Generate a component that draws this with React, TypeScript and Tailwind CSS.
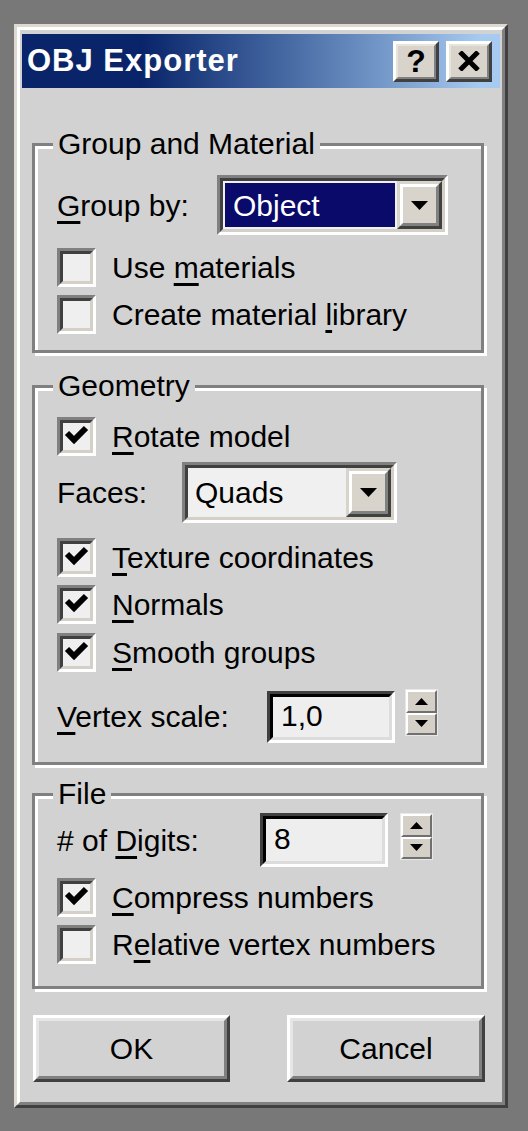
import type { ReactNode } from 'react';

const FACE = 'bg-[#d2d2d2]';

function CheckBox({ checked }: { checked?: boolean }) {
  return (
    <div className="w-[39px] h-[39px] shrink-0 border-[3px] border-t-[#808080] border-l-[#808080] border-r-white border-b-white">
      <div className="w-full h-full border-[3px] border-t-[#404040] border-l-[#404040] border-r-[#d4d0c8] border-b-[#d4d0c8] bg-[#efefef]">
        {checked && (
          <svg width="27" height="27" viewBox="0 0 27 27">
            <polyline points="4,10 11,17 23,5" fill="none" stroke="#000" strokeWidth="6" />
          </svg>
        )}
      </div>
    </div>
  );
}

function CheckRow({ checked, children, className = '' }: { checked?: boolean; children: ReactNode; className?: string }) {
  return (
    <div className={`flex items-center gap-[16px] h-[39px] ${className}`}>
      <CheckBox checked={checked} />
      <span>{children}</span>
    </div>
  );
}

function U({ children }: { children: ReactNode }) {
  return <u className="underline decoration-3 underline-offset-[5px]">{children}</u>;
}

function DropButton({ className = '' }: { className?: string }) {
  return (
    <div className={`h-full shrink-0 border-[3px] border-t-[#d8d4cc] border-l-[#d8d4cc] border-r-[#404040] border-b-[#404040] ${className}`}>
      <div className="h-full border-[3px] border-t-white border-l-white border-r-[#808080] border-b-[#808080] bg-[#d8d4cc] flex items-center justify-center">
        <svg width="17" height="9" viewBox="0 0 17 9">
          <polygon points="0,0 17,0 8.5,9" fill="#000" />
        </svg>
      </div>
    </div>
  );
}

function Combo({ value, selected, className = '' }: { value: string; selected?: boolean; className?: string }) {
  return (
    <div className={`shrink-0 border-[3px] border-t-[#808080] border-l-[#808080] border-r-white border-b-white ${className}`}>
      <div className="h-full flex border-[3px] border-t-[#404040] border-l-[#404040] border-r-[#d4d0c8] border-b-[#d4d0c8] bg-[#f0f0f0]">
        <div className="flex-1 flex p-[2px]">
          <div className={`flex-1 flex items-center ${selected ? 'bg-[#0a0a6a] text-white pl-[8px]' : 'text-black pl-[5px]'}`}>
            {value}
          </div>
        </div>
        <DropButton className="w-[45px]" />
      </div>
    </div>
  );
}

function SpinHalf({ up }: { up?: boolean }) {
  return (
    <div className="flex-1 border-[2px] border-t-white border-l-white border-r-[#707070] border-b-[#707070] bg-[#d4d0c8] flex items-center justify-center">
      <svg width="13" height="7" viewBox="0 0 13 7">
        <polygon points={up ? '0,7 13,7 6.5,0' : '0,0 13,0 6.5,7'} fill="#000" />
      </svg>
    </div>
  );
}

function SpinField({ value, inputClass, spinClass }: { value: string; inputClass: string; spinClass: string }) {
  return (
    <div className="flex items-start">
      <div className={`shrink-0 border-[3px] border-t-[#404040] border-l-[#404040] border-r-white border-b-white ${inputClass}`}>
        <div className="h-full border-[3px] border-t-black border-l-black border-r-[#dcdcdc] border-b-[#dcdcdc] bg-[#eeeeee] flex items-center pl-[8px] pb-[4px]">
          {value}
        </div>
      </div>
      <div className={`shrink-0 flex flex-col border border-[#e8e8e8] ${spinClass}`}>
        <SpinHalf up />
        <SpinHalf />
      </div>
    </div>
  );
}

function Group({ label, className, children }: { label: string; className: string; children: ReactNode }) {
  return (
    <div
      className={`relative w-[452px] border-[3px] border-[#808080] shadow-[inset_3px_3px_0_#fff,3px_3px_0_#fff] pl-[22px] ${className}`}
    >
      <span className={`absolute left-[18px] -top-[20px] px-[5px] leading-[36px] ${FACE}`}>{label}</span>
      {children}
    </div>
  );
}

function PushButton({ children, className }: { children: ReactNode; className: string }) {
  return (
    <div className={`border-[3px] border-t-white border-l-white border-r-[#404040] border-b-[#404040] ${className}`}>
      <div className={`h-full border-[3px] border-t-[#e6e6e6] border-l-[#e6e6e6] border-r-[#808080] border-b-[#808080] ${FACE} flex items-center justify-center`}>
        {children}
      </div>
    </div>
  );
}

function TitleButton({ children }: { children: ReactNode }) {
  return (
    <div className="w-[46px] h-[41px] border-[3px] border-t-white border-l-white border-r-[#404040] border-b-[#404040]">
      <div className="h-full border-[2px] border-t-[#e8e4dc] border-l-[#e8e4dc] border-r-[#808080] border-b-[#808080] bg-[#d8d4cc] flex items-center justify-center">
        {children}
      </div>
    </div>
  );
}

export default function App() {
  return (
    <div className="w-[528px] h-[1131px] bg-[#787878] pt-[24px] pl-[14px] overflow-hidden font-['Liberation_Sans',Arial,sans-serif] text-[30px] text-black">
      {/* Dialog frame */}
      <div className="w-[494px] h-[1084px] border-[3px] border-t-[#dedad2] border-l-[#dedad2] border-r-[#404040] border-b-[#404040]">
        <div className={`h-full border-[3px] border-t-white border-l-white border-r-[#808080] border-b-[#808080] ${FACE} px-[2px] pt-[4px]`}>
          {/* Title bar */}
          <div className="h-[54px] flex items-center pl-[5px] pr-[8px] bg-linear-to-r from-[#0a246a] from-[25%] to-[#a6caf0] to-[96%]">
            <span className="flex-1 text-white font-bold text-[31px] tracking-[1px]">OBJ Exporter</span>
            <div className="flex gap-[7px]">
              <TitleButton>
                <span className="font-bold text-[32px] leading-none">?</span>
              </TitleButton>
              <TitleButton>
                <svg width="22" height="20" viewBox="0 0 22 20">
                  <path d="M2 1 L20 19 M20 1 L2 19" stroke="#000" strokeWidth="5" />
                </svg>
              </TitleButton>
            </div>
          </div>

          <div className="ml-[10px]">
            {/* Group and Material */}
            <Group label="Group and Material" className="h-[210px] mt-[55px] pt-[29px]">
              <div className="flex items-center h-[60px]">
                <span className="w-[160px]">
                  <U>G</U>roup by:
                </span>
                <Combo value="Object" selected className="w-[231px] h-[60px]" />
              </div>
              <CheckRow className="mt-[13px]">
                Use <U>m</U>aterials
              </CheckRow>
              <CheckRow className="mt-[8px]">
                Create material <U>l</U>ibrary
              </CheckRow>
            </Group>

            {/* Geometry */}
            <Group label="Geometry" className="h-[380px] mt-[32px] pt-[29px]">
              <CheckRow checked>
                <U>R</U>otate model
              </CheckRow>
              <div className="flex items-center h-[61px] mt-[6px]">
                <span className="w-[125px]">Faces:</span>
                <Combo value="Quads" className="w-[215px] h-[61px]" />
              </div>
              <CheckRow checked className="mt-[15px]">
                <U>T</U>exture coordinates
              </CheckRow>
              <CheckRow checked className="mt-[8px]">
                <U>N</U>ormals
              </CheckRow>
              <CheckRow checked className="mt-[9px]">
                <U>S</U>mooth groups
              </CheckRow>
              <div className="flex items-center mt-[16px] h-[56px]">
                <span className="w-[210px]">
                  <U>V</U>ertex scale:
                </span>
                <SpinField value="1,0" inputClass="w-[128px] h-[52px] mt-[2px]" spinClass="w-[33px] h-[47px] ml-[10px]" />
              </div>
            </Group>

            {/* File */}
            <Group label="File" className="h-[196px] mt-[28px] pt-[17px]">
              <div className="flex items-center h-[54px]">
                <span className="w-[203px]">
                  # of <U>D</U>igits:
                </span>
                <SpinField value="8" inputClass="w-[128px] h-[54px]" spinClass="w-[33px] h-[47px] ml-[12px]" />
              </div>
              <CheckRow checked className="mt-[11px]">
                <U>C</U>ompress numbers
              </CheckRow>
              <CheckRow className="mt-[8px]">
                R<U>e</U>lative vertex numbers
              </CheckRow>
            </Group>

            {/* Buttons */}
            <div className="flex gap-[57px] mt-[26px] ml-[1px]">
              <PushButton className="w-[197px] h-[67px]">OK</PushButton>
              <PushButton className="w-[198px] h-[67px]">Cancel</PushButton>
            </div>
          </div>
        </div>
      </div>
    </div>
  );
}
